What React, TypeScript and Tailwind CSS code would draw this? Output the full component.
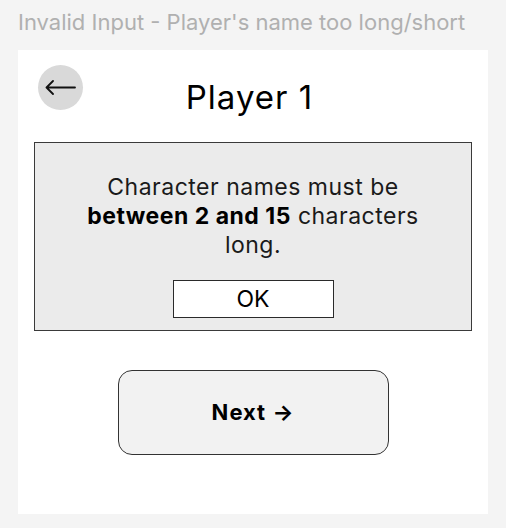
const BackArrow = () => (
  <svg width="31" height="15" viewBox="0 0 31 15" fill="none">
    <path
      d="M1.5 7.5H30M8 1L1.5 7.5L8 14"
      stroke="#111"
      strokeWidth="1.8"
      strokeLinecap="round"
      strokeLinejoin="round"
    />
  </svg>
);

const InvalidNameDialog = () => {
  return (
    <div className="mx-[16px] mt-[25px] flex h-[189px] flex-col items-center border border-[#3a3a3a] bg-[#ebebeb] pt-[30px]">
      <p className="text-center text-[23px] leading-[29px] tracking-[0.5px] text-[#1a1a1a]">
        Character names must be
        <br />
        <span className="font-bold text-black">between 2 and 15</span>{" "}
        characters
        <br />
        long.
      </p>
      <button
        type="button"
        className="mt-[20px] flex h-[38px] w-[161px] items-center justify-center border border-[#2a2a2a] bg-white text-[23px] text-black"
      >
        OK
      </button>
    </div>
  );
};

export default function App() {
  return (
    <div
      className="flex h-[528px] w-[506px] flex-col bg-[#f4f4f4] px-[18px]"
      style={{ fontFamily: "Inter, 'Noto Sans', sans-serif" }}
    >
      <h2 className="pt-[9px] text-[22px] leading-[26px] text-[#b0b0b0]">
        Invalid Input - Player's name too long/short
      </h2>

      <div className="mt-[15px] flex h-[464px] flex-col bg-white">
        <div className="flex items-start px-[20px] pt-[15px]">
          <button
            type="button"
            className="flex h-[45px] w-[45px] items-center justify-center rounded-full bg-[#d9d9d9]"
          >
            <BackArrow />
          </button>
          <h1 className="flex-1 pt-[12px] pr-[7px] text-center text-[33px] leading-[40px] tracking-[1px] text-black">
            Player 1
          </h1>
          <div className="w-[45px]" />
        </div>

        <InvalidNameDialog />

        <div className="mt-[39px] flex justify-center">
          <button
            type="button"
            className="flex h-[85px] w-[271px] items-center justify-center rounded-[14px] border border-[#333] bg-[#f2f2f2] text-[22px] font-bold tracking-[1px] text-black"
          >
            Next →
          </button>
        </div>
      </div>
    </div>
  );
}
